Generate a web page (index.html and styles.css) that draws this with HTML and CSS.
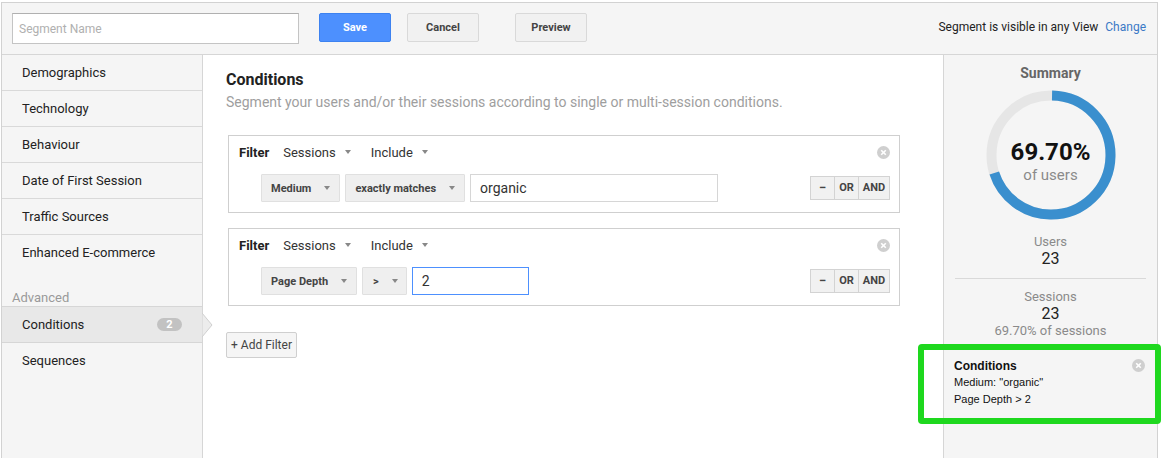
FILE: index.html
```html
<!DOCTYPE html>
<html>
<head>
<meta charset="utf-8">
<link rel="stylesheet" href="styles.css">
</head>
<body>
<div class="app">
  <header class="topbar">
    <input class="name-input" type="text" placeholder="Segment Name">
    <button class="btn btn-primary">Save</button>
    <button class="btn btn-cancel">Cancel</button>
    <button class="btn btn-preview">Preview</button>
    <div class="visibility">Segment is visible in any View <a class="change">Change</a></div>
  </header>
  <div class="body">
    <aside class="sidebar">
      <div class="nav-item">Demographics</div>
      <div class="nav-item">Technology</div>
      <div class="nav-item">Behaviour</div>
      <div class="nav-item">Date of First Session</div>
      <div class="nav-item">Traffic Sources</div>
      <div class="nav-item nav-last">Enhanced E-commerce</div>
      <div class="section-label">Advanced</div>
      <div class="nav-item nav-active">Conditions <span class="badge">2</span>
        <svg class="pointer" width="12" height="26" viewBox="0 0 12 26"><polygon points="0,1 10,13 0,25" fill="#ececec" stroke="#cfcfcf" stroke-width="1"/></svg>
      </div>
      <div class="nav-item nav-plain">Sequences</div>
    </aside>
    <main class="main">
      <h1 class="title">Conditions</h1>
      <p class="subtitle">Segment your users and/or their sessions according to single or multi-session conditions.</p>

      <div class="filter">
        <span class="close"><svg width="13" height="13" viewBox="0 0 13 13"><circle cx="6.5" cy="6.5" r="6.5" fill="#cfcfcf"/><path d="M4.2 4.2 L8.8 8.8 M8.8 4.2 L4.2 8.8" stroke="#fff" stroke-width="1.6"/></svg></span>
        <div class="filter-head">
          <b class="filter-label">Filter</b>
          <span class="sel">Sessions <i class="caret"></i></span>
          <span class="sel">Include <i class="caret"></i></span>
        </div>
        <div class="filter-row">
          <span class="dd">Medium <i class="caret"></i></span>
          <span class="dd">exactly matches <i class="caret"></i></span>
          <span class="val val-wide">organic</span>
          <div class="ops"><span class="op op-minus">−</span><span class="op op-or">OR</span><span class="op op-and">AND</span></div>
        </div>
      </div>

      <div class="filter">
        <span class="close"><svg width="13" height="13" viewBox="0 0 13 13"><circle cx="6.5" cy="6.5" r="6.5" fill="#cfcfcf"/><path d="M4.2 4.2 L8.8 8.8 M8.8 4.2 L4.2 8.8" stroke="#fff" stroke-width="1.6"/></svg></span>
        <div class="filter-head">
          <b class="filter-label">Filter</b>
          <span class="sel">Sessions <i class="caret"></i></span>
          <span class="sel">Include <i class="caret"></i></span>
        </div>
        <div class="filter-row">
          <span class="dd">Page Depth <i class="caret"></i></span>
          <span class="dd dd-op">&gt; <i class="caret"></i></span>
          <span class="val val-focus">2</span>
          <div class="ops"><span class="op op-minus">−</span><span class="op op-or">OR</span><span class="op op-and">AND</span></div>
        </div>
      </div>

      <button class="add-filter">+ Add Filter</button>
    </main>
    <aside class="summary">
      <div class="sum-title">Summary</div>
      <div class="donut">
        <svg width="130" height="130" viewBox="0 0 130 130">
          <circle cx="65" cy="65" r="59.5" fill="none" stroke="#e6e6e6" stroke-width="10"/>
          <circle cx="65" cy="65" r="59.5" fill="none" stroke="#3a8fce" stroke-width="10" stroke-dasharray="260.6 400" transform="rotate(-89 65 65)"/>
        </svg>
        <div class="donut-text">
          <div class="pct">69.70%</div>
          <div class="of">of users</div>
        </div>
      </div>
      <div class="stat">
        <div class="stat-label">Users</div>
        <div class="stat-num">23</div>
      </div>
      <div class="divider"></div>
      <div class="stat">
        <div class="stat-label">Sessions</div>
        <div class="stat-num">23</div>
        <div class="stat-label">69.70% of sessions</div>
      </div>
      <div class="cond-card">
        <span class="card-close"><svg width="13" height="13" viewBox="0 0 13 13"><circle cx="6.5" cy="6.5" r="6.5" fill="#cfcfcf"/><path d="M4.2 4.2 L8.8 8.8 M8.8 4.2 L4.2 8.8" stroke="#fff" stroke-width="1.6"/></svg></span>
        <div class="card-title">Conditions</div>
        <div class="card-line">Medium: "organic"</div>
        <div class="card-line">Page Depth &gt; 2</div>
      </div>
    </aside>
  </div>
  <div class="highlight"></div>
</div>
</body>
</html>
```

FILE: styles.css
```css
* { box-sizing: border-box; }
html, body { margin: 0; padding: 0; background: #fff; }
body {
  font-family: Roboto, "Liberation Sans", Arial, sans-serif;
  color: #222;
  width: 1163px;
  height: 458px;
  overflow: hidden;
  position: relative;
}
.app {
  margin: 2px 0 0 1px;
  width: 1157px;
  height: 456px;
  border: 1px solid #d2d2d2;
  border-bottom: none;
  display: flex;
  flex-direction: column;
}
.topbar {
  height: 52px;
  flex: none;
  background: #f5f5f5;
  border-bottom: 1px solid #d6d6d6;
  display: flex;
  align-items: flex-start;
  padding: 10px 11px 0 10px;
}
.name-input {
  width: 287px;
  height: 31px;
  border: 1px solid #c4c4c4;
  border-top-color: #b0b0b0;
  background: #fff;
  font-family: Roboto, sans-serif;
  font-size: 12px;
  padding: 0 6px;
  margin: 0;
  outline: none;
}
.name-input::placeholder { color: #b0b0b0; }
.btn {
  height: 29px;
  width: 72px;
  font-family: Roboto, sans-serif;
  font-size: 11px;
  font-weight: bold;
  border-radius: 2px;
  margin: 0;
  padding: 0;
}
.btn-primary {
  margin-left: 20px;
  background: #4d90fe;
  border: 1px solid #3d82f0;
  color: #fff;
}
.btn-cancel, .btn-preview {
  background: #f1f1f1;
  border: 1px solid #d9d9d9;
  color: #444;
}
.btn-cancel { margin-left: 16px; }
.btn-preview { margin-left: 36px; }
.visibility {
  margin-left: auto;
  font-size: 12px;
  color: #222;
  line-height: 29px;
}
.change { color: #3a79c6; margin-left: 4px; }

.body {
  flex: 1;
  display: flex;
  min-height: 0;
}
.sidebar {
  width: 201px;
  flex: none;
  background: #f5f5f5;
  border-right: 1px solid #d6d6d6;
}
.nav-item {
  height: 36px;
  line-height: 35px;
  padding-left: 20px;
  font-size: 13px;
  color: #222;
  border-bottom: 1px solid #d9d9d9;
  position: relative;
}
.nav-last { border-bottom: none; height: 35px; }
.section-label {
  margin-top: 20px;
  height: 16px;
  line-height: 16px;
  padding-left: 10px;
  font-size: 13px;
  color: #9a9a9a;
}
.nav-active {
  background: #e8e8e8;
  border-top: 1px solid #d6d6d6;
  border-bottom: 1px solid #d6d6d6;
  height: 37px;
}
.nav-plain { border-bottom: none; }
.badge {
  position: absolute;
  left: 155px;
  top: 11px;
  width: 25px;
  height: 13px;
  border-radius: 7px;
  background: #c2c2c2;
  color: #fff;
  font-size: 11px;
  font-weight: bold;
  line-height: 13px;
  text-align: center;
}
.pointer {
  position: absolute;
  left: 200px;
  top: 5px;
}

.main {
  width: 740px;
  flex: none;
  background: #fff;
  padding: 15px 43px 0 23px;
}
.title {
  margin: 0;
  font-size: 16px;
  line-height: 19px;
  font-weight: bold;
  color: #222;
}
.subtitle {
  margin: 5px 0 24px;
  font-size: 14px;
  line-height: 17px;
  color: #9e9e9e;
}
.filter {
  position: relative;
  margin-left: 2px;
  width: 672px;
  border: 1px solid #cfcfcf;
  padding: 6px 9px 10px 10px;
  margin-bottom: 15px;
}
.close {
  position: absolute;
  right: 9px;
  top: 10px;
  width: 13px;
  height: 13px;
  display: block;
}
.close svg, .card-close svg { display: block; }
.filter-head {
  height: 20px;
  display: flex;
  align-items: center;
  font-size: 13px;
  color: #333;
}
.filter-label { font-weight: bold; color: #222; font-size: 13px; margin-right: 14px; }
.sel { display: inline-flex; align-items: center; margin-right: 20px; }
.sel .caret { margin-left: 9px; }
.caret {
  display: inline-block;
  width: 0;
  height: 0;
  border-left: 3.5px solid transparent;
  border-right: 3.5px solid transparent;
  border-top: 4px solid #888;
}
.filter-row {
  margin-top: 12px;
  margin-left: 22px;
  height: 28px;
  display: flex;
  align-items: center;
  gap: 5px;
}
.dd {
  height: 28px;
  display: inline-flex;
  align-items: center;
  padding: 0 9px 0 9px;
  background: #efefef;
  border: 1px solid #e0e0e0;
  font-size: 11px;
  font-weight: bold;
  color: #444;
  border-radius: 1px;
}
.dd .caret { margin-left: 13px; }
.dd-op { padding-left: 10px; padding-right: 8px; }
.val {
  height: 28px;
  display: inline-flex;
  align-items: center;
  padding-left: 9px;
  border: 1px solid #d6d6d6;
  font-size: 14px;
  color: #333;
  background: #fff;
}
.val-wide { width: 248px; }
.val-focus { width: 117px; border-color: #4d90fe; }
.ops {
  margin-left: auto;
  display: flex;
  height: 24px;
}
.op {
  height: 24px;
  line-height: 22px;
  text-align: center;
  background: #f1f1f1;
  border: 1px solid #d3d3d3;
  font-size: 11px;
  font-weight: bold;
  color: #444;
}
.op + .op { border-left: none; }
.op-minus { width: 25px; font-size: 13px; }
.op-or { width: 24px; }
.op-and { width: 31px; }
.add-filter {
  margin-top: 11px;
  height: 26px;
  width: 71px;
  padding: 0;
  background: #f5f5f5;
  border: 1px solid #cfcfcf;
  border-radius: 2px;
  font-family: Roboto, sans-serif;
  font-size: 12px;
  color: #444;
}

.summary {
  flex: 1;
  background: #f5f5f5;
  border-left: 1px solid #d6d6d6;
  padding-top: 9px;
  display: flex;
  flex-direction: column;
  align-items: center;
}
.sum-title {
  font-size: 14px;
  line-height: 18px;
  font-weight: bold;
  color: #666;
}
.donut {
  margin-top: 8px;
  width: 130px;
  height: 130px;
  position: relative;
}
.donut svg { display: block; }
.donut-text {
  position: absolute;
  left: 0; right: 0;
  top: 0; bottom: 0;
  display: flex;
  flex-direction: column;
  align-items: center;
  justify-content: center;
  padding-top: 12px;
}
.pct { font-size: 24px; font-weight: bold; color: #111; line-height: 28px; }
.of { font-size: 15px; color: #8a8a8a; line-height: 18px; }
.stat {
  text-align: center;
  margin-top: 14px;
}
.stat-label { font-size: 13px; line-height: 16px; color: #8a8a8a; }
.stat-num { font-size: 16px; line-height: 18px; color: #222; }
.divider {
  width: 191px;
  height: 1px;
  background: #d9d9d9;
  margin-top: 10px;
}
.divider + .stat { margin-top: 10px; }
.cond-card {
  align-self: stretch;
  position: relative;
  margin-top: 19px;
  padding-left: 10px;
  font-family: "Liberation Sans", Arial, sans-serif;
  color: #111;
}
.card-title { font-size: 12px; font-weight: bold; line-height: 16px; }
.card-line { font-size: 11px; line-height: 17px; }
.card-close {
  position: absolute;
  right: 12px;
  top: 1px;
  width: 13px;
  height: 13px;
}
.highlight {
  position: absolute;
  left: 918px;
  top: 344px;
  width: 243px;
  height: 80px;
  border: 6px solid #1ed81e;
  border-radius: 4px;
  pointer-events: none;
}
```
